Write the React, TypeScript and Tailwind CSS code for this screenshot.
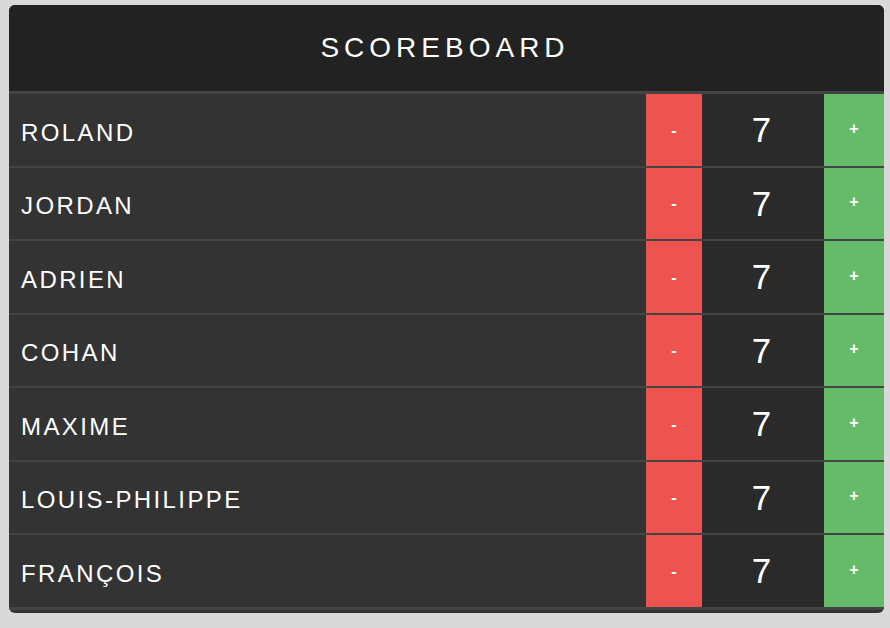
import React, { useState } from 'react';

const initialPlayers = [
  'ROLAND',
  'JORDAN',
  'ADRIEN',
  'COHAN',
  'MAXIME',
  'LOUIS-PHILIPPE',
  'FRANÇOIS',
];

function App() {
  const [scores, setScores] = useState<number[]>(initialPlayers.map(() => 7));

  const change = (index: number, delta: number) => {
    setScores((prev) => prev.map((s, i) => (i === index ? s + delta : s)));
  };

  return (
    <div className="min-h-screen w-full bg-[#d9d9d9] pt-[5px] pl-[9px] font-['Liberation_Sans',Arial,sans-serif]">
      <div className="w-[875px] rounded-[6px] overflow-hidden bg-[#333333] pb-[3px]">
        <header className="h-[89px] bg-[#222222] border-b-[3px] border-[#444444] flex items-center justify-center">
          <h1 className="text-[28px] tracking-[5px] text-white pr-[3px]">SCOREBOARD</h1>
        </header>

        {initialPlayers.map((name, i) => (
          <div
            key={name}
            className={`flex h-[73.5px] border-[#444444] ${
              i === initialPlayers.length - 1 ? 'border-b-[3px] h-[74.5px]' : 'border-b-2'
            }`}
          >
            <div className="flex-1 flex items-center pl-[12px] pt-[6px] text-[24px] tracking-[0.1em] text-white">
              {name}
            </div>
            <button
              onClick={() => change(i, -1)}
              className="w-[56px] bg-[#ef5350] text-white text-[16px] font-bold flex items-center justify-center pt-[2px]"
            >
              -
            </button>
            <div className="w-[122px] bg-[#2a2a2a] text-white text-[35px] flex items-center justify-center pt-[1px] pr-[3px]">
              {scores[i]}
            </div>
            <button
              onClick={() => change(i, 1)}
              className="w-[60px] bg-[#66bb6a] text-white text-[16px] font-bold flex items-center justify-center pb-[2px]"
            >
              +
            </button>
          </div>
        ))}
      </div>
    </div>
  );
}

export default App;
